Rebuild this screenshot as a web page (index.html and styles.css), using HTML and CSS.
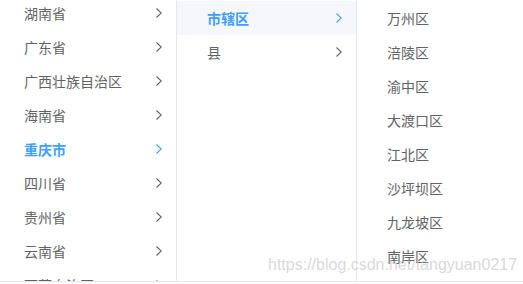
FILE: index.html
```html
<!DOCTYPE html>
<html lang="zh-CN">
<head>
    <meta charset="UTF-8">
    <title>级联选择</title>
    <link rel="stylesheet" href="styles.css">
</head>
<body>
    <div class="cascader-panel">
        <div class="cascader-menu menu-province">
            <ul class="menu-list">
                <li class="node"><span class="node-label">湖南省</span><svg class="arrow" viewBox="0 0 6 10"><path d="M0.5 0.5 L5.3 5 L0.5 9.5"/></svg></li>
                <li class="node"><span class="node-label">广东省</span><svg class="arrow" viewBox="0 0 6 10"><path d="M0.5 0.5 L5.3 5 L0.5 9.5"/></svg></li>
                <li class="node"><span class="node-label">广西壮族自治区</span><svg class="arrow" viewBox="0 0 6 10"><path d="M0.5 0.5 L5.3 5 L0.5 9.5"/></svg></li>
                <li class="node"><span class="node-label">海南省</span><svg class="arrow" viewBox="0 0 6 10"><path d="M0.5 0.5 L5.3 5 L0.5 9.5"/></svg></li>
                <li class="node in-path"><span class="node-label">重庆市</span><svg class="arrow" viewBox="0 0 6 10"><path d="M0.5 0.5 L5.3 5 L0.5 9.5"/></svg></li>
                <li class="node"><span class="node-label">四川省</span><svg class="arrow" viewBox="0 0 6 10"><path d="M0.5 0.5 L5.3 5 L0.5 9.5"/></svg></li>
                <li class="node"><span class="node-label">贵州省</span><svg class="arrow" viewBox="0 0 6 10"><path d="M0.5 0.5 L5.3 5 L0.5 9.5"/></svg></li>
                <li class="node"><span class="node-label">云南省</span><svg class="arrow" viewBox="0 0 6 10"><path d="M0.5 0.5 L5.3 5 L0.5 9.5"/></svg></li>
                <li class="node"><span class="node-label">西藏自治区</span><svg class="arrow" viewBox="0 0 6 10"><path d="M0.5 0.5 L5.3 5 L0.5 9.5"/></svg></li>
            </ul>
        </div>
        <div class="cascader-menu menu-city">
            <ul class="menu-list">
                <li class="node in-path hovered"><span class="node-label">市辖区</span><svg class="arrow" viewBox="0 0 6 10"><path d="M0.5 0.5 L5.3 5 L0.5 9.5"/></svg></li>
                <li class="node"><span class="node-label">县</span><svg class="arrow" viewBox="0 0 6 10"><path d="M0.5 0.5 L5.3 5 L0.5 9.5"/></svg></li>
            </ul>
        </div>
        <div class="cascader-menu menu-district">
            <ul class="menu-list">
                <li class="node"><span class="node-label">万州区</span></li>
                <li class="node"><span class="node-label">涪陵区</span></li>
                <li class="node"><span class="node-label">渝中区</span></li>
                <li class="node"><span class="node-label">大渡口区</span></li>
                <li class="node"><span class="node-label">江北区</span></li>
                <li class="node"><span class="node-label">沙坪坝区</span></li>
                <li class="node"><span class="node-label">九龙坡区</span></li>
                <li class="node"><span class="node-label">南岸区</span></li>
            </ul>
        </div>
        <div class="watermark">https://blog.csdn.net/tangyuan0217</div>
    </div>
</body>
</html>
```

FILE: styles.css
```css
body {
    margin: 0;
    background: #fff;
    font-family: "Noto Sans CJK SC", "Microsoft YaHei", sans-serif;
    overflow: hidden;
}
.cascader-panel {
    position: relative;
    display: flex;
    height: 281px;
    border-bottom: 1px solid #e4e7ed;
    overflow: hidden;
    font-size: 14px;
    color: #606266;
}
.cascader-menu {
    border-right: 1px solid #e4e7ed;
    overflow: hidden;
}
.menu-province {
    width: 176px;
}
.menu-city {
    width: 179px;
}
.menu-district {
    flex: 1;
    border-right: none;
}
.menu-list {
    list-style: none;
    margin: 0;
    padding: 1px 0 0;
}
.menu-province .menu-list {
    margin-top: -5px;
}
.node {
    display: flex;
    align-items: center;
    height: 34px;
    padding: 0 14px 0 20px;
}
.menu-province .node {
    padding-left: 14px;
}
.node-label {
    flex: 1;
    padding: 0 10px;
    white-space: nowrap;
}
.arrow {
    width: 6px;
    height: 10px;
    fill: none;
    stroke: #606266;
    stroke-width: 1.1;
}
.node.in-path {
    color: #409eff;
    font-weight: 600;
}
.node.in-path .arrow {
    stroke: #409eff;
}
.node.hovered {
    background: #f5f7fa;
}
.watermark {
    position: absolute;
    left: 268px;
    top: 256px;
    font-family: "Liberation Sans", Arial, sans-serif;
    font-size: 16px;
    color: rgba(190, 190, 190, 0.6);
    white-space: nowrap;
}
```
